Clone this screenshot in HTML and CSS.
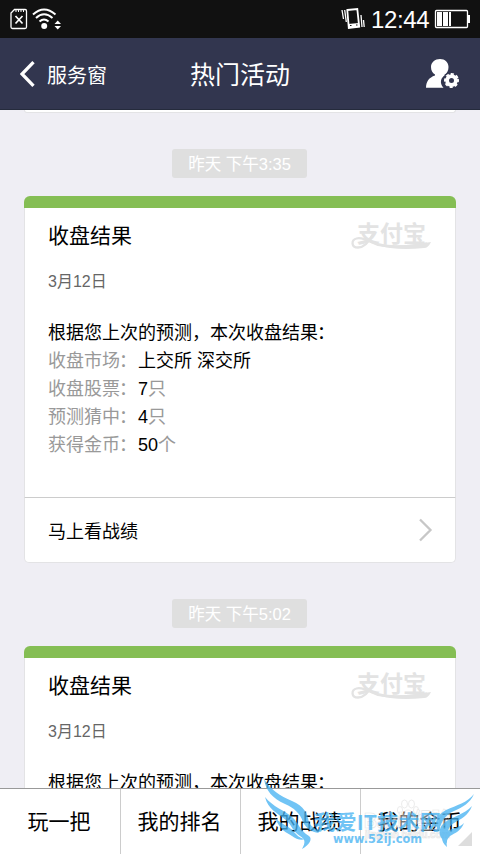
FILE: index.html
```html
<!DOCTYPE html>
<html lang="zh-CN">
<head>
<meta charset="utf-8">
<title>热门活动</title>
<link rel="stylesheet" href="styles.css">
</head>
<body>
<div class="screen">
  <div class="status">
    <svg class="status-left" width="64" height="38" viewBox="0 0 64 38" fill="none" stroke="#fff">
      <path d="M14.500 9.500H25.200Q26.500 9.500 26.500 11V27Q26.500 28.500 25 28.500H12.500Q11 28.500 11 27V13Z" stroke-width="1.300"/>
      <path d="M16 10V12M18.500 10V12M21 10V12M23.500 10V12" stroke-width="1"/>
      <path d="M15.500 16L22.500 23.500M22.500 16L15.500 23.500" stroke-width="1.700"/>
      <path d="M33 14.500Q44 4.500 55.500 14.500M36 18Q44 10.500 52.500 18M39.500 21.500Q44 17.500 48.500 21.500" stroke-width="2"/>
      <circle cx="44.200" cy="26" r="3" fill="#fff" stroke="none"/>
      <path d="M54.500 24L57.700 20.500L61 24ZM54.500 26L57.700 29.500L61 26Z" fill="#fff" stroke="none"/>
    </svg>
    <svg class="vibrate" width="26" height="38" viewBox="340 0 26 38" fill="none" stroke="#fff">
      <path d="M342 10L343.500 19M344.700 10L346.300 22M361 15L362 27M363.500 20L364.200 27" stroke-width="1.300"/>
      <path d="M347.300 10L357.300 9L359.200 26.800L348.800 28Z" stroke-width="1.800"/>
      <path d="M348 24L359 23L359.500 27L348.800 28.300Z" fill="#fff" stroke="none"/>
      <path d="M350 25.500H351.500M356 25H357.500" stroke="#111" stroke-width="1"/>
    </svg>
    <span class="clock">12:44</span>
    <svg class="battery" width="36" height="38" viewBox="434 0 36 38">
      <rect x="435.500" y="10.500" width="32" height="17" rx="1" fill="none" stroke="#fff" stroke-width="1.300"/>
      <path d="M437 12H442V26H437ZM443 12H448V26H443ZM449 12H451V26H449ZM468 15H470V23H468Z" fill="#fff"/>
    </svg>
  </div>
  <div class="nav">
    <div class="back">
      <svg width="16" height="26" viewBox="0 0 16 26"><path d="M13.500 1.200L2 13L13.500 24.800" fill="none" stroke="#fff" stroke-width="3.300"/></svg>
      <span>服务窗</span>
    </div>
    <div class="nav-title">热门活动</div>
    <svg class="user" width="35" height="32" viewBox="425 58 35 32">
      <path d="M440 59C445 59 448.500 62.500 448.500 67C448.500 70.500 447 73 445 74.500V75.500C441 77 439 83 443.500 87.700H426C426 81.500 429 77.500 435 75.500V74.500C432.500 73 431 70.500 431 67C431 62.500 435 59 440 59Z" fill="#fff"/>
      <circle cx="451.500" cy="80.500" r="8.800" fill="#32364f"/>
      <circle cx="451.500" cy="80.500" r="4.400" fill="none" stroke="#fff" stroke-width="3.800"/>
      <circle cx="451.500" cy="80.500" r="6.500" fill="none" stroke="#fff" stroke-width="2" stroke-dasharray="3 2.105" transform="rotate(-13 451.500 80.500)"/>
    </svg>
  </div>
  <div class="feed">
    <div class="card-end"></div>
    <div class="time">昨天 下午3:35</div>
    <div class="card">
      <div class="card-bar"></div>
      <div class="card-body">
        <div class="card-head">
          <span class="card-title">收盘结果</span>
          <svg class="alipay" width="82" height="32" viewBox="351 219 82 32">
            <text x="357" y="241" textLength="69" lengthAdjust="spacingAndGlyphs">支付宝</text>
            <path d="M373 233C369 241 364 246.500 358 246.500C351 246.500 351 239 356.500 237.500C363 235.500 370 241 378 244C391 247 408 246 427 242.500" fill="none" stroke="#e3e3e3" stroke-width="2.300"/>
            <path d="M378 242C394 246 412 244 431 241C429 245 427 247 424 247C405 249 389 248 377 244Z"/>
          </svg>
        </div>
        <div class="date">3月12日</div>
        <div class="lines">
          <div class="dark">根据您上次的预测，本次收盘结果<i>：</i></div>
          <div>收盘市场<i>：</i><b>上交所 深交所</b></div>
          <div>收盘股票<i>：</i><b>7</b>只</div>
          <div>预测猜中<i>：</i><b>4</b>只</div>
          <div>获得金币<i>：</i><b>50</b>个</div>
        </div>
      </div>
      <div class="more"><span>马上看战绩</span>
        <svg width="14" height="24" viewBox="0 0 14 24"><path d="M1 1.500L11.500 12L1 22.500" fill="none" stroke="#c7c7c7" stroke-width="2.300"/></svg>
      </div>
    </div>
    <div class="time">昨天 下午5:02</div>
    <div class="card">
      <div class="card-bar"></div>
      <div class="card-body">
        <div class="card-head">
          <span class="card-title">收盘结果</span>
          <svg class="alipay" width="82" height="32" viewBox="351 219 82 32">
            <text x="357" y="241" textLength="69" lengthAdjust="spacingAndGlyphs">支付宝</text>
            <path d="M373 233C369 241 364 246.500 358 246.500C351 246.500 351 239 356.500 237.500C363 235.500 370 241 378 244C391 247 408 246 427 242.500" fill="none" stroke="#e3e3e3" stroke-width="2.300"/>
            <path d="M378 242C394 246 412 244 431 241C429 245 427 247 424 247C405 249 389 248 377 244Z"/>
          </svg>
        </div>
        <div class="date">3月12日</div>
        <div class="lines"><div class="dark">根据您上次的预测，本次收盘结果<i>：</i></div></div>
      </div>
    </div>
  </div>
  <div class="tabs">
    <div>玩一把</div><div>我的排名</div><div>我的战绩</div><div>我的金币</div>
  </div>
  <svg class="mark" width="230" height="84" viewBox="250 770 230 84">
    <path d="M472 832V846H458Z" fill="#ddd"/>
    <g fill="#fff" stroke="#ccc" stroke-width=".7" opacity=".5">
      <ellipse cx="400" cy="810" rx="2.600" ry="3.500"/><ellipse cx="404.500" cy="804" rx="3" ry="4"/><ellipse cx="411.500" cy="804" rx="3" ry="4"/><ellipse cx="416" cy="810" rx="2.600" ry="3.500"/>
      <path d="M408 810C412 810 414 816 417 819C420 826 412 828 408 826C404 828 397 826 399 819C402 816 404 810 408 810Z"/>
      <text class="baidu" x="364" y="828" textLength="86" lengthAdjust="spacingAndGlyphs">Baidu经验</text>
      <text class="baidu-url" x="365" y="838" textLength="85" lengthAdjust="spacingAndGlyphs">jingyan.baidu.com</text>
    </g>
    <g fill="#45b2f2" opacity=".76">
      <path d="M264 779C271 790 280 796 292 801C304 806 308 814 309 823C312 827 316 829 319 833C311 832 306 828 303 822C300 813 294 808 285 804C272 798 266 791 264 779Z"/>
      <path d="M265 797C273 807 284 810 292 817C299 823 299 830 309 836C313 839 309 845 302 849C306 842 305 839 300 836C292 831 292 825 286 820C277 813 268 809 265 797Z"/>
      <path d="M275 818C281 824 289 826 293 831C297 835 299 838 305 839C301 841 296 839 292 836C287 833 280 830 275 818Z"/>
      <path d="M474 794C470 803 463 807 454 811C445 815 442 821 439 830C433 823 437 815 446 810C457 805 467 803 474 794Z"/>
      <path d="M472 806C468 816 461 819 454 823C447 827 447 835 447 843C439 838 437 831 443 824C452 816 464 815 472 806Z"/>
      <path d="M464 823C461 831 455 833 450 836C447 839 446 842 447 847C440 841 441 835 447 831C453 828 459 828 464 823Z"/>
      <text class="site" x="314" y="829.500" textLength="127" lengthAdjust="spacingAndGlyphs">我爱IT技术网</text>
      <text class="url" x="333" y="843" textLength="89" lengthAdjust="spacingAndGlyphs">www.52ij.com</text>
    </g>
  </svg>
</div>
</body>
</html>
```
FILE: styles.css
```css
* { box-sizing: border-box; }
body { margin: 0; font-family: "Liberation Sans", "Noto Sans CJK SC", sans-serif; color: #000; }
.screen { position: relative; width: 480px; height: 854px; overflow: hidden; display: flex; flex-direction: column; background: #efeef4; }
svg { display: block; flex: none; }
.status { flex: none; height: 38px; background: #111; color: #fff; display: flex; align-items: center; }
.vibrate { margin-left: auto; }
.clock { width: 64px; margin: 2px 0 0 5px; font-size: 24px; line-height: 36px; white-space: nowrap; letter-spacing: -.35px; }
.battery { margin: 0 10px 0 -1px; }
.nav { flex: none; height: 72px; background: #32364f; border-bottom: 1px solid #252b3c; color: #fff; display: grid; grid-template-columns: 1fr auto 1fr; align-items: center; padding: 0 20px; }
.back { display: flex; align-items: center; gap: 11px; font-size: 20px; }
.back span { padding-top: 2px; }
.nav-title { font-size: 25px; line-height: 36px; padding-top: 2px; }
.user { justify-self: end; }
.feed { flex: 1; min-height: 0; overflow: hidden; display: flex; flex-direction: column; align-items: center; }
.card-end { flex: none; width: 432px; height: 3px; background: #fff; border: 1px solid #e3e3e5; border-top: 0; border-radius: 0 0 4px 4px; margin-bottom: 36px; }
.time { flex: none; width: 135px; height: 29px; padding-top: 1px; line-height: 29px; border-radius: 3px; background: #dfdfdf; color: #fff; font-size: 16.500px; text-align: center; white-space: nowrap; margin: 0 1px 18px 0; }
.card { flex: none; width: 432px; height: 367px; margin-bottom: 36px; display: flex; flex-direction: column; }
.card-bar { flex: none; height: 12px; background: #85be54; border-radius: 6px 6px 0 0; }
.card-body { flex: 1; background: #fff; border: solid #e3e3e5; border-width: 0 1px; }
.card-head { height: 55px; display: flex; justify-content: space-between; align-items: center; padding: 0 22px 0 23px; }
.card-title { font-size: 21px; line-height: 30px; padding-top: 1px; }
.alipay { fill: #e3e3e3; overflow: visible; }
.alipay text { font: 700 23px "Noto Sans CJK SC", sans-serif; }
.date { height: 38px; line-height: 38px; padding-left: 23px; font-size: 16px; color: #666; margin-bottom: 18px; }
.lines { padding-left: 23px; font-size: 18px; line-height: 28px; color: #999; white-space: nowrap; }
.lines b, .dark { color: #000; font-weight: 400; }
.lines i { font-style: normal; margin: 0 1px 0 -1px; }
.more { flex: none; height: 66px; background: #fff; border: 1px solid #e3e3e5; border-top-color: #ccc; border-radius: 0 0 5px 5px; padding: 0 22px 0 23px; display: flex; justify-content: space-between; align-items: center; font-size: 18px; }
.tabs { flex: none; height: 66px; border-top: 1px solid #999; background: #fff; display: grid; grid-template-columns: repeat(4, 1fr); font-size: 21px; text-align: center; line-height: 65px; }
.tabs div { padding-right: 2px; }
.tabs div + div { border-left: 1px solid #ccc; }
.mark { position: absolute; right: 0; bottom: 0; }
.site { font: 700 20px "Noto Sans CJK SC", sans-serif; }
.url { font: bold 12.500px "DejaVu Sans", sans-serif; }
.baidu { font: bold 22px "Liberation Sans", "Noto Sans CJK SC", sans-serif; }
.baidu-url { font: bold 10px "Liberation Sans", sans-serif; }
```
